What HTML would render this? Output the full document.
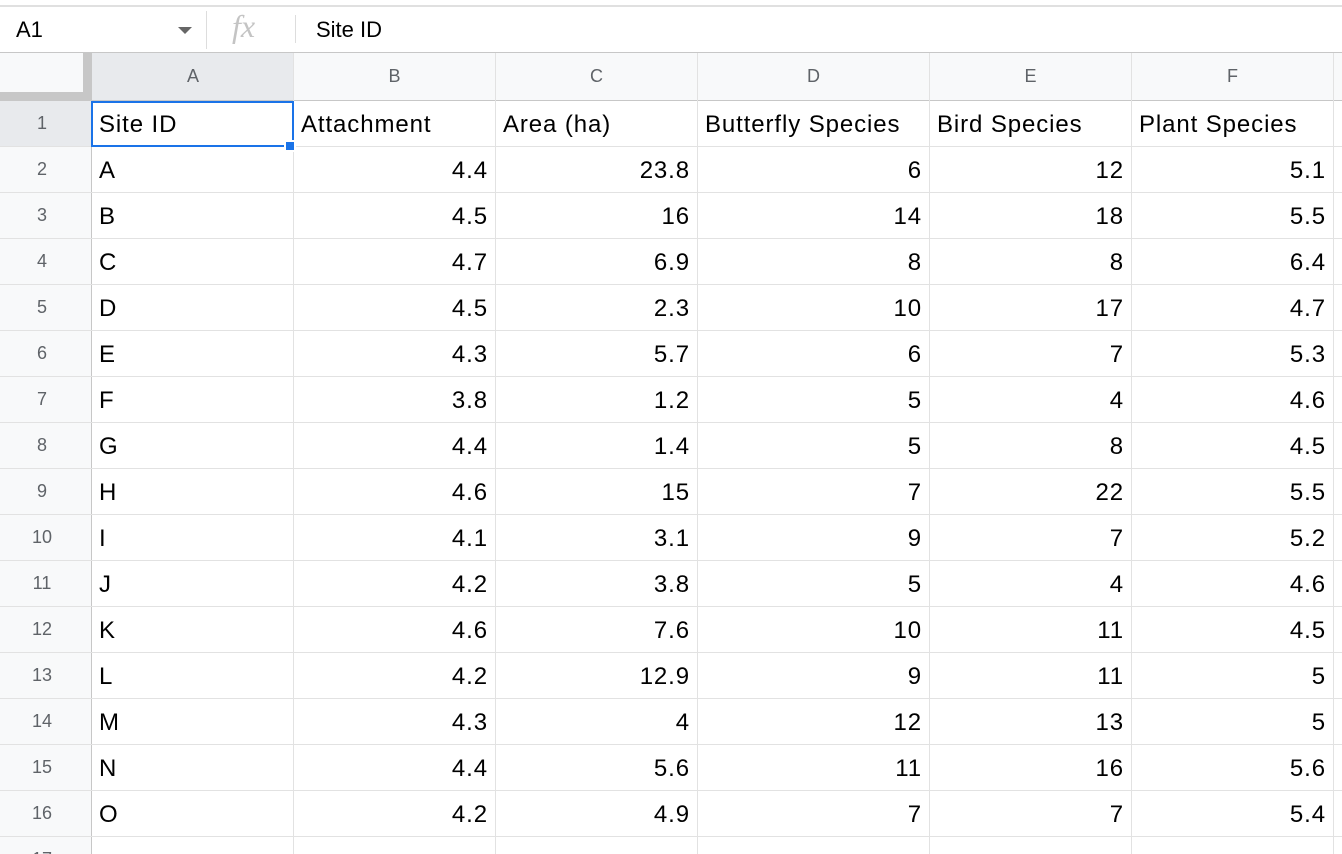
<!DOCTYPE html>
<html><head><style>
html,body{margin:0;width:1342px;height:854px;overflow:hidden}
body{background:#fff;font-family:"Liberation Sans",sans-serif;position:relative}
div{position:absolute;box-sizing:border-box}
.v{top:53px;width:1px;height:801px;background:#e2e2e2}
.h{left:0;width:1342px;height:1px;background:#e2e2e2}
.c{height:46px;line-height:47px;font-size:24px;letter-spacing:0.9px;color:#000;white-space:nowrap;padding:0 7px}
.rt{text-align:right}
.hd{top:53px;height:47px;line-height:47px;font-size:18px;color:#5f6368;text-align:center;background:#f8f9fa}
.rn{left:0;width:84px;height:45px;line-height:45px;font-size:18px;color:#5f6368;text-align:center;background:#f8f9fa}
.a{left:92px;width:201px}.b{left:294px;width:201px}.cc{left:496px;width:201px}.d{left:698px;width:231px}.e{left:930px;width:201px}.f{left:1132px;width:201px}
</style></head><body>
<div style="left:0;top:0;width:1342px;height:7px;border-bottom:2px solid #e0e0e0"></div>
<div style="left:0;top:52px;width:1342px;height:1px;background:#c7c7c7"></div>
<div style="left:16px;top:17px;font-size:22px">A1</div>
<div style="left:178px;top:27px;width:0;height:0;border-left:7px solid transparent;border-right:7px solid transparent;border-top:7px solid #666"></div>
<div style="left:206px;top:11px;width:1px;height:38px;background:#ddd"></div>
<div style="left:232px;top:8px;font-size:32px;font-style:italic;color:#c4c4c4;font-family:'Liberation Serif',serif">fx</div>
<div style="left:295px;top:15px;width:1px;height:28px;background:#ddd"></div>
<div style="left:316px;top:17px;font-size:22px">Site ID</div>

<div style="left:0;top:53px;width:92px;height:48px;background:#f8f9fa"></div>
<div style="left:83px;top:53px;width:8px;height:48px;background:#c7c7c7"></div>
<div style="left:0;top:92px;width:91px;height:9px;background:#c7c7c7"></div>
<div style="left:0;top:101px;width:91px;height:753px;background:#f8f9fa"></div>
<div style="left:0;top:101px;width:91px;height:46px;background:#e8eaed"></div>
<div class="hd a" style="background:#e8eaed;width:202px">A</div>
<div class="hd b">B</div><div class="hd cc">C</div><div class="hd d">D</div><div class="hd e">E</div><div class="hd f">F</div>
<div class="hd" style="left:1334px;width:8px"></div>
<div style="left:0;top:100px;width:1342px;height:1px;background:#c7c7c7"></div>

<div class="v" style="left:91px;background:#c7c7c7"></div>
<div class="v" style="left:293px"></div><div class="v" style="left:495px"></div><div class="v" style="left:697px"></div><div class="v" style="left:929px"></div><div class="v" style="left:1131px"></div><div class="v" style="left:1333px"></div>
<div class="h" style="top:146px"></div><div class="h" style="top:192px"></div><div class="h" style="top:238px"></div><div class="h" style="top:284px"></div><div class="h" style="top:330px"></div><div class="h" style="top:376px"></div><div class="h" style="top:422px"></div><div class="h" style="top:468px"></div><div class="h" style="top:514px"></div><div class="h" style="top:560px"></div><div class="h" style="top:606px"></div><div class="h" style="top:652px"></div><div class="h" style="top:698px"></div><div class="h" style="top:744px"></div><div class="h" style="top:790px"></div><div class="h" style="top:836px"></div>

<div class="rn" style="top:101px;background:#e8eaed">1</div>
<div class="c a" style="top:101px">Site ID</div><div class="c b" style="top:101px">Attachment</div><div class="c cc" style="top:101px">Area (ha)</div><div class="c d" style="top:101px">Butterfly Species</div><div class="c e" style="top:101px">Bird Species</div><div class="c f" style="top:101px">Plant Species</div>

<div class="rn" style="top:147px">2</div><div class="c a" style="top:147px">A</div><div class="c b rt" style="top:147px">4.4</div><div class="c cc rt" style="top:147px">23.8</div><div class="c d rt" style="top:147px">6</div><div class="c e rt" style="top:147px">12</div><div class="c f rt" style="top:147px">5.1</div>
<div class="rn" style="top:193px">3</div><div class="c a" style="top:193px">B</div><div class="c b rt" style="top:193px">4.5</div><div class="c cc rt" style="top:193px">16</div><div class="c d rt" style="top:193px">14</div><div class="c e rt" style="top:193px">18</div><div class="c f rt" style="top:193px">5.5</div>
<div class="rn" style="top:239px">4</div><div class="c a" style="top:239px">C</div><div class="c b rt" style="top:239px">4.7</div><div class="c cc rt" style="top:239px">6.9</div><div class="c d rt" style="top:239px">8</div><div class="c e rt" style="top:239px">8</div><div class="c f rt" style="top:239px">6.4</div>
<div class="rn" style="top:285px">5</div><div class="c a" style="top:285px">D</div><div class="c b rt" style="top:285px">4.5</div><div class="c cc rt" style="top:285px">2.3</div><div class="c d rt" style="top:285px">10</div><div class="c e rt" style="top:285px">17</div><div class="c f rt" style="top:285px">4.7</div>
<div class="rn" style="top:331px">6</div><div class="c a" style="top:331px">E</div><div class="c b rt" style="top:331px">4.3</div><div class="c cc rt" style="top:331px">5.7</div><div class="c d rt" style="top:331px">6</div><div class="c e rt" style="top:331px">7</div><div class="c f rt" style="top:331px">5.3</div>
<div class="rn" style="top:377px">7</div><div class="c a" style="top:377px">F</div><div class="c b rt" style="top:377px">3.8</div><div class="c cc rt" style="top:377px">1.2</div><div class="c d rt" style="top:377px">5</div><div class="c e rt" style="top:377px">4</div><div class="c f rt" style="top:377px">4.6</div>
<div class="rn" style="top:423px">8</div><div class="c a" style="top:423px">G</div><div class="c b rt" style="top:423px">4.4</div><div class="c cc rt" style="top:423px">1.4</div><div class="c d rt" style="top:423px">5</div><div class="c e rt" style="top:423px">8</div><div class="c f rt" style="top:423px">4.5</div>
<div class="rn" style="top:469px">9</div><div class="c a" style="top:469px">H</div><div class="c b rt" style="top:469px">4.6</div><div class="c cc rt" style="top:469px">15</div><div class="c d rt" style="top:469px">7</div><div class="c e rt" style="top:469px">22</div><div class="c f rt" style="top:469px">5.5</div>
<div class="rn" style="top:515px">10</div><div class="c a" style="top:515px">I</div><div class="c b rt" style="top:515px">4.1</div><div class="c cc rt" style="top:515px">3.1</div><div class="c d rt" style="top:515px">9</div><div class="c e rt" style="top:515px">7</div><div class="c f rt" style="top:515px">5.2</div>
<div class="rn" style="top:561px">11</div><div class="c a" style="top:561px">J</div><div class="c b rt" style="top:561px">4.2</div><div class="c cc rt" style="top:561px">3.8</div><div class="c d rt" style="top:561px">5</div><div class="c e rt" style="top:561px">4</div><div class="c f rt" style="top:561px">4.6</div>
<div class="rn" style="top:607px">12</div><div class="c a" style="top:607px">K</div><div class="c b rt" style="top:607px">4.6</div><div class="c cc rt" style="top:607px">7.6</div><div class="c d rt" style="top:607px">10</div><div class="c e rt" style="top:607px">11</div><div class="c f rt" style="top:607px">4.5</div>
<div class="rn" style="top:653px">13</div><div class="c a" style="top:653px">L</div><div class="c b rt" style="top:653px">4.2</div><div class="c cc rt" style="top:653px">12.9</div><div class="c d rt" style="top:653px">9</div><div class="c e rt" style="top:653px">11</div><div class="c f rt" style="top:653px">5</div>
<div class="rn" style="top:699px">14</div><div class="c a" style="top:699px">M</div><div class="c b rt" style="top:699px">4.3</div><div class="c cc rt" style="top:699px">4</div><div class="c d rt" style="top:699px">12</div><div class="c e rt" style="top:699px">13</div><div class="c f rt" style="top:699px">5</div>
<div class="rn" style="top:745px">15</div><div class="c a" style="top:745px">N</div><div class="c b rt" style="top:745px">4.4</div><div class="c cc rt" style="top:745px">5.6</div><div class="c d rt" style="top:745px">11</div><div class="c e rt" style="top:745px">16</div><div class="c f rt" style="top:745px">5.6</div>
<div class="rn" style="top:791px">16</div><div class="c a" style="top:791px">O</div><div class="c b rt" style="top:791px">4.2</div><div class="c cc rt" style="top:791px">4.9</div><div class="c d rt" style="top:791px">7</div><div class="c e rt" style="top:791px">7</div><div class="c f rt" style="top:791px">5.4</div>
<div class="rn" style="top:837px;height:17px;line-height:45px;overflow:hidden">17</div>

<div style="left:91px;top:101px;width:203px;height:46px;border:2px solid #1a73e8"></div>
<div style="left:284px;top:140px;width:12px;height:12px;background:#1a73e8;border:2px solid #fff"></div>
</body></html>
